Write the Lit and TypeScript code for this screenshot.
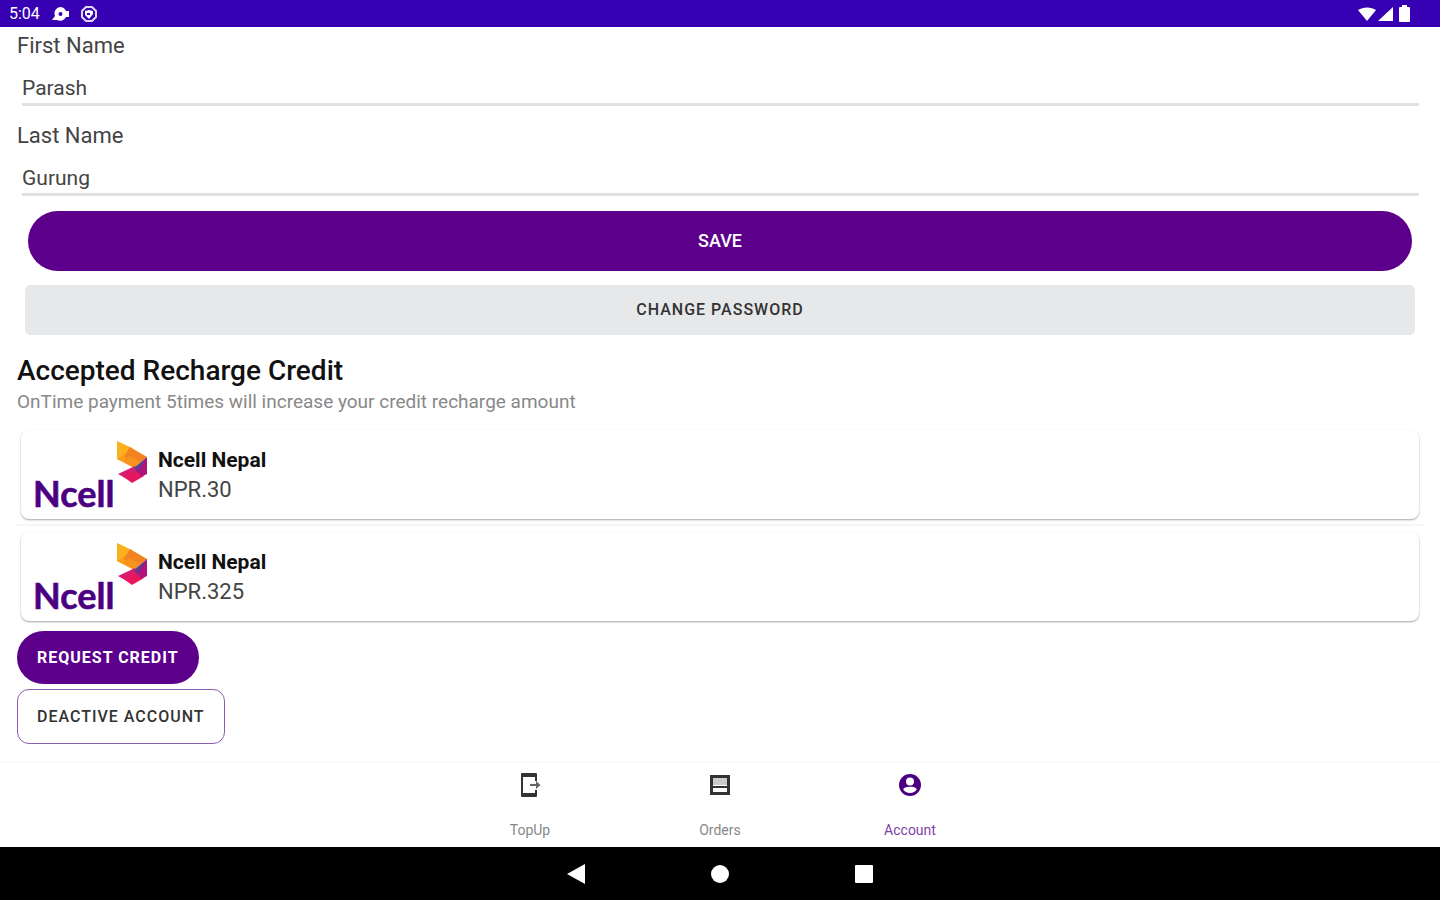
import { LitElement, html, css, svg } from "lit";
import { customElement, property, state } from "lit/decorators.js";

@customElement("ncell-logo")
export class NcellLogo extends LitElement {
  static styles = css`
    :host {
      display: block;
      flex: none;
    }
    .logo {
      display: block;
    }
    .word {
      font: 700 36px/36px Lato, sans-serif;
      fill: #4b0082;
      stroke: #4b0082;
      stroke-width: 0.6px;
    }
  `;

  render() {
    return html`
      <svg class="logo" width="116" height="78" viewBox="0 0 116 78" role="img" aria-label="Ncell">
        <text class="word" x="0" y="68">Ncell</text>
        <path fill="#fbb01f" d="M84 2 L99 9 L90 23 L84 20 Z" />
        <path fill="#f9a01b" d="M84 20 L97 11 L101 29 Z" />
        <path fill="#f58220" d="M97 8 L114 18 L101 29 L91 18 Z" />
        <path fill="#f7931e" d="M90 22 L96 17 L108 23 L101 29 Z" />
        <path fill="#d81b72" d="M85 35 L102 27 L108 37 L99 43 Z" />
        <path fill="#e8175d" d="M91 38 L103 31 L111 37 L99 44 Z" />
        <path fill="#5b3c93" d="M101 29 L114 18 L112 31 L105 34 Z" />
        <path fill="#b0127b" d="M114 18 L114 35 L108 38 L105 32 Z" />
      </svg>
    `;
  }
}

@customElement("credit-card")
export class CreditCard extends LitElement {
  static styles = css`
    :host {
      display: flex;
      align-items: flex-start;
      gap: 9px;
      box-sizing: border-box;
      padding: 9px 12px 2px;
      border-radius: 8px;
      background: #fff;
      box-shadow: 0 1px 2px rgba(0, 0, 0, 0.36);
    }
    .text {
      display: grid;
      gap: 2px;
      padding-top: 7px;
    }
    .name,
    .amount {
      margin: 0;
      line-height: 28px;
    }
    .name {
      font-size: 21px;
      font-weight: 700;
      color: #111;
    }
    .amount {
      font-size: 22px;
      font-weight: 400;
      color: #444;
    }
  `;

  @property() name = "";
  @property() amount = "";

  render() {
    return html`
      <ncell-logo></ncell-logo>
      <div class="text">
        <h3 class="name">${this.name}</h3>
        <p class="amount">${this.amount}</p>
      </div>
    `;
  }
}

const navIcons: Record<string, unknown> = {
  TopUp: svg`
    <path fill="none" stroke="currentColor" stroke-width="2" d="M19 9V3H5v20h14v-5" />
    <path fill="currentColor" d="M4 2q0-1 1-1h14q1 0 1 1v3H4zM4 21h16v3q0 1-1 1H5q-1 0-1-1z" />
    <path fill="currentColor" opacity=".75" d="M13 12h6V9l4.500 4-4.500 4v-3h-6z" />`,
  Orders: svg`
    <path fill="none" stroke="currentColor" stroke-width="3" d="M4.500 4.500h17v17h-17z" />
    <path fill="#ccc" d="M6 6h14v7H6z" />
    <path fill="currentColor" d="M5 14h16v2H5z" />`,
  Account: svg`
    <path fill="currentColor" fill-rule="evenodd" d="M13 2a11 11 0 1 0 0 22 11 11 0 0 0 0-22zm0 3.500a4 4 0 1 1 0 8 4 4 0 0 1 0-8zm0 15.500c-3 0-5.400-1.300-6.700-3.500.1-2 4.400-2.700 6.700-2.700s6.600.7 6.700 2.700c-1.300 2.200-3.700 3.500-6.700 3.500z" />`,
};

@customElement("app-root")
export class AppRoot extends LitElement {
  static styles = css`
    :host {
      display: flex;
      flex-direction: column;
      min-height: 100vh;
      background: #fff;
      color: #444;
      font-family: Roboto, sans-serif;
    }
    .status {
      display: flex;
      align-items: center;
      justify-content: space-between;
      height: 27px;
      padding: 0 28px 0 9px;
      background: #3700b3;
      color: #fff;
      font-size: 16px;
      line-height: 27px;
    }
    .status-left {
      display: flex;
      align-items: center;
      gap: 10px;
    }
    .status-right {
      display: flex;
      align-items: center;
      gap: 2px;
    }
    .icon {
      display: block;
    }
    .content {
      flex: 1;
      display: flex;
      flex-direction: column;
      padding: 4px 17px 16px;
    }
    .field {
      display: flex;
      flex-direction: column;
      height: 90px;
    }
    .label {
      font-size: 22px;
      line-height: 30px;
    }
    .input {
      margin: 12px 4px 0 5px;
      padding: 0;
      border: 0;
      border-bottom: 3px solid #e1e1e1;
      border-radius: 0;
      outline: 0;
      background: transparent;
      color: #444;
      font: 400 21px/30px Roboto, sans-serif;
      height: 30px;
    }
    .button {
      margin: 0;
      border: 0;
      cursor: pointer;
      font: 500 16px/24px Roboto, sans-serif;
      letter-spacing: 1px;
      text-transform: uppercase;
    }
    .save {
      margin: 0 11px;
      height: 60px;
      border-radius: 30px;
      background: #5c008c;
      color: #fff;
      font-size: 18px;
      letter-spacing: normal;
    }
    .change {
      margin: 14px 8px 0;
      height: 50px;
      border-radius: 5px;
      background: #e6e8ea;
      color: #333;
    }
    .title {
      margin: 19px 0 0;
      font-size: 28px;
      line-height: 34px;
      font-weight: 500;
      color: #111;
    }
    .hint {
      margin: 0;
      font-size: 19px;
      line-height: 28px;
      color: #888;
    }
    .cards {
      list-style: none;
      margin: 14px 0 0;
      padding: 0;
    }
    .row {
      padding: 0 4px 5px;
    }
    .row + .row {
      padding-top: 6px;
      border-top: 2px solid #f5f5f5;
    }
    .actions {
      display: flex;
      flex-direction: column;
      align-items: flex-start;
      gap: 5px;
      margin-top: 5px;
    }
    .request {
      height: 53px;
      padding: 0 20px;
      border-radius: 27px;
      background: #5c008c;
      color: #fff;
      font-weight: 700;
    }
    .deactive {
      height: 55px;
      padding: 0 19px;
      border: 1px solid #8a5cb0;
      border-radius: 12px;
      background: #fff;
      color: #333;
    }
    .nav {
      display: flex;
      justify-content: center;
      height: 85px;
      border-top: 1px solid #f7f7f7;
      box-sizing: border-box;
    }
    .nav-item {
      display: flex;
      flex-direction: column;
      align-items: center;
      gap: 20px;
      width: 190px;
      padding-top: 9px;
      text-decoration: none;
      color: #333;
    }
    .nav-text {
      font-size: 14px;
      line-height: 24px;
      color: #888;
    }
    .nav-item.active {
      color: #4b0082;
    }
    .nav-item.active .nav-text {
      color: #7b3fa8;
    }
    .system {
      display: flex;
      justify-content: center;
      align-items: center;
      height: 53px;
      background: #000;
    }
    .system-button {
      display: grid;
      place-items: center;
      width: 144px;
      height: 53px;
      padding: 0;
      border: 0;
      background: transparent;
      cursor: pointer;
    }
  `;

  @state() private firstName = "Parash";
  @state() private lastName = "Gurung";
  @state() private tab = "Account";

  private credits = [
    { name: "Ncell Nepal", amount: "NPR.30" },
    { name: "Ncell Nepal", amount: "NPR.325" },
  ];

  private selectTab(event: Event, name: string) {
    event.preventDefault();
    this.tab = name;
  }

  render() {
    return html`
      <header class="status">
        <div class="status-left">
          <span>5:04</span>
          <svg class="icon" width="20" height="18" viewBox="0 0 20 18" aria-hidden="true">
            <path fill="#fff" fill-rule="evenodd" d="M10 2a6.500 6.500 0 0 1 6 4h3v6h-3a6.500 6.500 0 0 1-9 3H2l3-4a6.500 6.500 0 0 1 5-9zm.5 5a2 2 0 1 0 0 4 2 2 0 0 0 0-4z" />
          </svg>
          <svg class="icon" width="18" height="18" viewBox="0 0 18 18" aria-hidden="true">
            <path fill="none" stroke="#fff" stroke-width="2" opacity=".85" d="M6 2h6l4 4v6l-4 4H6l-4-4V6z" />
            <path fill="#fff" d="M5 6l4-1 4 1v3l-4 5-4-4z" />
            <path fill="#3700b3" d="M7 8h3v2H7z" />
          </svg>
        </div>
        <div class="status-right">
          <svg class="icon" width="18" height="16" viewBox="0 0 18 16" aria-hidden="true">
            <path fill="#fff" d="M0 4c5-3.500 13-3.500 18 0L9 15z" />
          </svg>
          <svg class="icon" width="16" height="16" viewBox="0 0 16 16" aria-hidden="true">
            <path fill="#fff" d="M15 1v14H0z" />
          </svg>
          <svg class="icon" width="16" height="18" viewBox="0 0 16 18" aria-hidden="true">
            <path fill="#fff" d="M6 0h5v2h2q1 0 1 1v13q0 1-1 1H4q-1 0-1-1V3q0-1 1-1h2z" />
          </svg>
        </div>
      </header>

      <main class="content">
        <div class="field">
          <label class="label" for="first">First Name</label>
          <input class="input" id="first" type="text" .value=${this.firstName} />
        </div>
        <div class="field">
          <label class="label" for="last">Last Name</label>
          <input class="input" id="last" type="text" .value=${this.lastName} />
        </div>
        <button class="button save" type="button">Save</button>
        <button class="button change" type="button">Change Password</button>

        <h2 class="title">Accepted Recharge Credit</h2>
        <p class="hint">OnTime payment 5times will increase your credit recharge amount</p>
        <ul class="cards">
          ${this.credits.map(
            (c) => html`<li class="row"><credit-card .name=${c.name} .amount=${c.amount}></credit-card></li>`
          )}
        </ul>
        <div class="actions">
          <button class="button request" type="button">Request Credit</button>
          <button class="button deactive" type="button">Deactive Account</button>
        </div>
      </main>

      <nav class="nav">
        ${["TopUp", "Orders", "Account"].map(
          (name) => html`
            <a
              class="nav-item ${this.tab === name ? "active" : ""}"
              href="#${name}"
              @click=${(e: Event) => this.selectTab(e, name)}
            >
              <svg class="icon" width="26" height="26" viewBox="0 0 26 26" aria-hidden="true">${navIcons[name]}</svg>
              <span class="nav-text">${name}</span>
            </a>
          `
        )}
      </nav>

      <footer class="system">
        <button class="system-button" type="button" aria-label="Back">
          <svg class="icon" width="20" height="20" viewBox="0 0 20 20"><path fill="#fff" d="M19 0v20L1 10z" /></svg>
        </button>
        <button class="system-button" type="button" aria-label="Home">
          <svg class="icon" width="20" height="20" viewBox="0 0 20 20"><circle cx="10" cy="10" r="9" fill="#fff" /></svg>
        </button>
        <button class="system-button" type="button" aria-label="Recents">
          <svg class="icon" width="20" height="20" viewBox="0 0 20 20"><rect x="1" y="1" width="18" height="18" rx="1" fill="#fff" /></svg>
        </button>
      </footer>
    `;
  }
}
